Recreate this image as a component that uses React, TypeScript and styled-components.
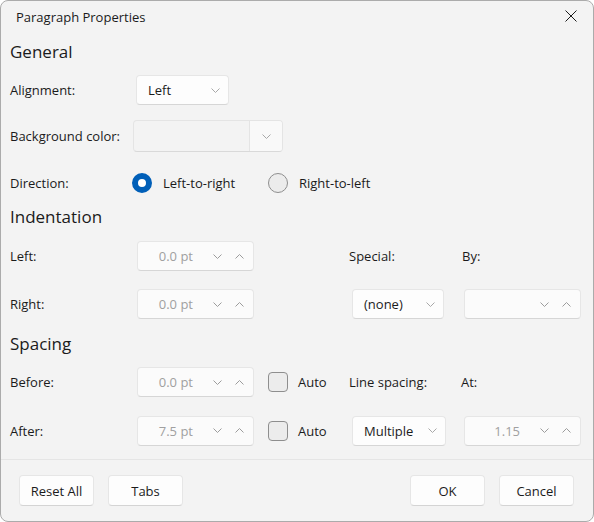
import React from "react";
import styled, { createGlobalStyle } from "styled-components";

const Global = createGlobalStyle`
  html, body { margin: 0; padding: 0; background: #ffffff; }
  body { font-family: "Open Sans", "Noto Sans", sans-serif; font-size: 13px; color: #1b1b1b; }
  * { box-sizing: border-box; }
`;

const Window = styled.div`
  width: 594px;
  height: 522px;
  border: 1px solid #ababab;
  border-radius: 8px;
  background: #f3f3f3;
  display: flex;
  flex-direction: column;
  overflow: hidden;
`;

const TitleBar = styled.div`
  height: 33px;
  display: flex;
  align-items: flex-start;
  justify-content: space-between;
`;

const Title = styled.div`
  font-size: 13px;
  line-height: 18px;
  margin-top: 7px;
  padding-left: 15px;
  color: #1b1b1b;
`;

const CloseButton = styled.div`
  width: 44px;
  height: 30px;
  display: flex;
  align-items: center;
  justify-content: center;
`;

const Body = styled.div`
  flex: 1;
  padding-left: 9px;
`;

const SectionTitle = styled.div<{ $mt: number }>`
  font-size: 17px;
  line-height: 24px;
  height: 24px;
  margin-top: ${(p) => p.$mt}px;
  color: #1b1b1b;
`;

const Row = styled.div<{ $mt: number; $h: number }>`
  display: grid;
  grid-template-columns: 127px 131px 81px 115px 117px;
  align-items: center;
  height: ${(p) => p.$h}px;
  margin-top: ${(p) => p.$mt}px;
`;

const Label = styled.div<{ $shift?: number }>`
  line-height: 18px;
  white-space: nowrap;
  margin-left: ${(p) => p.$shift ?? 0}px;
  color: #1b1b1b;
`;

const Dropdown = styled.div<{ $w: number; $shift?: number }>`
  width: ${(p) => p.$w}px;
  height: 30px;
  margin-left: ${(p) => p.$shift ?? 0}px;
  display: flex;
  align-items: center;
  justify-content: space-between;
  padding: 0 8px 0 11px;
  background: #fdfdfd;
  border: 1px solid #e6e6e6;
  border-bottom-color: #d6d6d6;
  border-radius: 4px;
  color: #1b1b1b;
`;

const ColorCombo = styled.div`
  grid-column: span 2;
  width: 150px;
  height: 32px;
  margin-left: -4px;
  display: flex;
  border: 1px solid #e4e4e4;
  border-bottom-color: #d9d9d9;
  border-radius: 4px;
  overflow: hidden;
  background: #f3f3f3;
`;

const ColorSwatch = styled.div`
  flex: 1;
  border-right: 1px solid #e4e4e4;
`;

const ColorButton = styled.div`
  width: 32px;
  display: flex;
  align-items: center;
  justify-content: center;
  background: #f9f9f9;
`;

const SpinBox = styled.div<{ $shift?: number }>`
  width: 117px;
  height: 30px;
  margin-left: ${(p) => p.$shift ?? 0}px;
  display: flex;
  align-items: center;
  padding-right: 3px;
  background: #fbfbfb;
  border: 1px solid #e6e6e6;
  border-bottom-color: #d6d6d6;
  border-radius: 4px;
`;

const SpinValue = styled.div`
  flex: 1;
  text-align: right;
  padding-right: 13px;
  color: #a0a0a0;
`;

const SpinButton = styled.div`
  width: 22px;
  height: 100%;
  display: flex;
  align-items: center;
  justify-content: center;
`;

const RadioOption = styled.div<{ $shift?: number }>`
  display: flex;
  align-items: center;
  gap: 11px;
  margin-left: ${(p) => p.$shift ?? 0}px;
  white-space: nowrap;
`;

const RadioCircle = styled.div<{ $checked?: boolean }>`
  width: 20px;
  height: 20px;
  border-radius: 50%;
  flex: none;
  ${(p) =>
    p.$checked
      ? `background: #005fb8; border: 6px solid #005fb8; box-shadow: inset 0 0 0 4px #ffffff; background: #ffffff;`
      : `background: #ececec; border: 1px solid #8e8e8e;`}
`;

const CheckOption = styled.div`
  display: flex;
  align-items: center;
  gap: 10px;
  white-space: nowrap;
`;

const CheckBox = styled.div`
  width: 20px;
  height: 20px;
  border-radius: 4px;
  border: 1px solid #8e8e8e;
  background: #ececec;
  flex: none;
`;

const Footer = styled.div`
  border-top: 1px solid #e5e5e5;
  padding: 15px 19px 15px 18px;
  display: flex;
  align-items: center;
`;

const ButtonGroup = styled.div`
  display: flex;
  gap: 14px;
`;

const Spacer = styled.div`
  flex: 1;
`;

const Button = styled.div`
  width: 75px;
  height: 31px;
  display: flex;
  align-items: center;
  justify-content: center;
  background: #fdfdfd;
  border: 1px solid #e6e6e6;
  border-bottom-color: #d4d4d4;
  border-radius: 4px;
  color: #1b1b1b;
`;

const Chevron = ({ up, color = "#9c9c9c" }: { up?: boolean; color?: string }) => (
  <svg width="9" height="5" viewBox="0 0 9 5">
    <polyline
      points={up ? "0.5,4.5 4.5,0.5 8.5,4.5" : "0.5,0.5 4.5,4.5 8.5,0.5"}
      fill="none"
      stroke={color}
      strokeWidth="1"
    />
  </svg>
);

const Spin = ({ value, shift }: { value: string; shift?: number }) => (
  <SpinBox $shift={shift}>
    <SpinValue>{value}</SpinValue>
    <SpinButton>
      <Chevron />
    </SpinButton>
    <SpinButton>
      <Chevron up />
    </SpinButton>
  </SpinBox>
);

const Empty = styled.div``;

export default function App() {
  return (
    <>
      <Global />
      <Window>
        <TitleBar>
          <Title>Paragraph Properties</Title>
          <CloseButton>
            <svg width="12" height="12" viewBox="0 0 12 12">
              <path d="M0.5 0.5 L11.5 11.5 M11.5 0.5 L0.5 11.5" stroke="#1b1b1b" strokeWidth="1" />
            </svg>
          </CloseButton>
        </TitleBar>
        <Body>
          <SectionTitle $mt={6}>General</SectionTitle>
          <Row $mt={11} $h={30}>
            <Label>Alignment:</Label>
            <Dropdown $w={93} $shift={-1}>
              <span>Left</span>
              <Chevron color="#a8a8a8" />
            </Dropdown>
          </Row>
          <Row $mt={15} $h={32}>
            <Label>Background color:</Label>
            <ColorCombo>
              <ColorSwatch />
              <ColorButton>
                <Chevron color="#a8a8a8" />
              </ColorButton>
            </ColorCombo>
          </Row>
          <Row $mt={21} $h={20}>
            <Label>Direction:</Label>
            <RadioOption $shift={-5}>
              <RadioCircle $checked />
              <span>Left-to-right</span>
            </RadioOption>
            <RadioOption>
              <RadioCircle />
              <span>Right-to-left</span>
            </RadioOption>
          </Row>

          <SectionTitle $mt={12}>Indentation</SectionTitle>
          <Row $mt={12} $h={30}>
            <Label>Left:</Label>
            <Spin value="0.0 pt" />
            <Empty />
            <Label>Special:</Label>
            <Label $shift={-2}>By:</Label>
          </Row>
          <Row $mt={18} $h={30}>
            <Label>Right:</Label>
            <Spin value="0.0 pt" />
            <Empty />
            <Dropdown $w={92} $shift={3}>
              <span>(none)</span>
              <Chevron color="#a8a8a8" />
            </Dropdown>
            <Spin value="" />
          </Row>

          <SectionTitle $mt={13}>Spacing</SectionTitle>
          <Row $mt={11} $h={30}>
            <Label>Before:</Label>
            <Spin value="0.0 pt" />
            <CheckOption>
              <CheckBox />
              <span>Auto</span>
            </CheckOption>
            <Label>Line spacing:</Label>
            <Label $shift={-3}>At:</Label>
          </Row>
          <Row $mt={18} $h={31}>
            <Label>After:</Label>
            <Spin value="7.5 pt" />
            <CheckOption>
              <CheckBox />
              <span>Auto</span>
            </CheckOption>
            <Dropdown $w={94} $shift={3}>
              <span>Multiple</span>
              <Chevron color="#a8a8a8" />
            </Dropdown>
            <Spin value="1.15" />
          </Row>
        </Body>
        <Footer>
          <ButtonGroup>
            <Button>Reset All</Button>
            <Button>Tabs</Button>
          </ButtonGroup>
          <Spacer />
          <ButtonGroup>
            <Button>OK</Button>
            <Button>Cancel</Button>
          </ButtonGroup>
        </Footer>
      </Window>
    </>
  );
}
